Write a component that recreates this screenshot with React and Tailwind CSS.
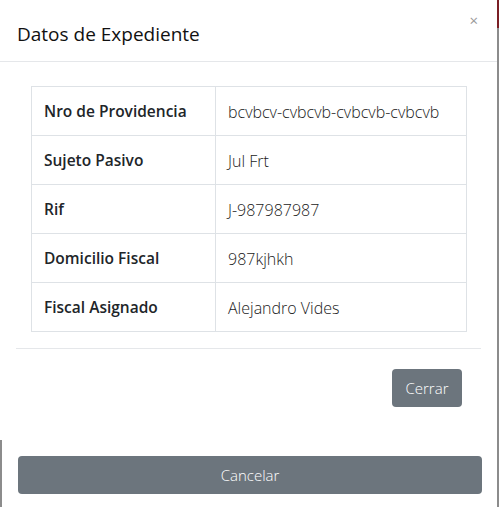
import React from "react";

const rows = [
  { label: "Nro de Providencia", value: "bcvbcv-cvbcvb-cvbcvb-cvbcvb" },
  { label: "Sujeto Pasivo", value: "Jul Frt" },
  { label: "Rif", value: "J-987987987" },
  { label: "Domicilio Fiscal", value: "987kjhkh" },
  { label: "Fiscal Asignado", value: "Alejandro Vides" },
];

export default function App() {
  return (
    <div
      className="w-[501px] h-[507px] bg-white overflow-hidden flex"
      style={{ fontFamily: '"Open Sans", "Noto Sans", sans-serif' }}
    >
      <div className="w-[497px] flex flex-col">
        {/* Modal */}
        <div className="h-[440px] bg-white flex flex-col">
          <div className="h-[62px] border-b border-[#e5e7ea] flex items-start justify-between">
            <h5 className="pl-[17px] pt-[20px] text-[19px] leading-[28px] text-[#111]">
              Datos de Expediente
            </h5>
            <button className="mt-[13px] mr-[19px] text-[#999] text-[15px] leading-none">
              ×
            </button>
          </div>

          <div className="px-[31px] pt-[24px] pb-[16px]">
            <table className="w-[436px] border-collapse border border-[#dee2e6] text-[16px] text-[#212529]">
              <tbody>
                {rows.map((r) => (
                  <tr key={r.label} className="h-[49px]">
                    <th className="w-[184px] border border-[#dee2e6] pl-[12px] pt-[1px] text-left font-semibold text-[15.5px]">
                      {r.label}
                    </th>
                    <td className="border border-[#dee2e6] pl-[12px] pt-[1px] font-light text-[#1a1a1a]">
                      {r.value}
                    </td>
                  </tr>
                ))}
              </tbody>
            </table>
          </div>

          <div className="mx-[16px] border-t border-[#e5e7ea] flex justify-end pt-[20px] pr-[19px]">
            <button className="w-[70px] h-[38px] rounded bg-[#6c757d] text-white text-[15px] font-light">
              Cerrar
            </button>
          </div>
        </div>

        {/* Page behind */}
        <div className="flex-1 border-l-2 border-[#8c8c8c] pt-[16px] pl-[16px]">
          <button className="w-[464px] h-[38px] rounded bg-[#6c757d] text-white text-[15px] font-light">
            Cancelar
          </button>
        </div>
      </div>

      <div className="w-[2px] flex flex-col">
        <div className="h-[28px] bg-[#7b1f25]" />
        <div className="flex-1 bg-[#8c8c8c]" />
      </div>
    </div>
  );
}
